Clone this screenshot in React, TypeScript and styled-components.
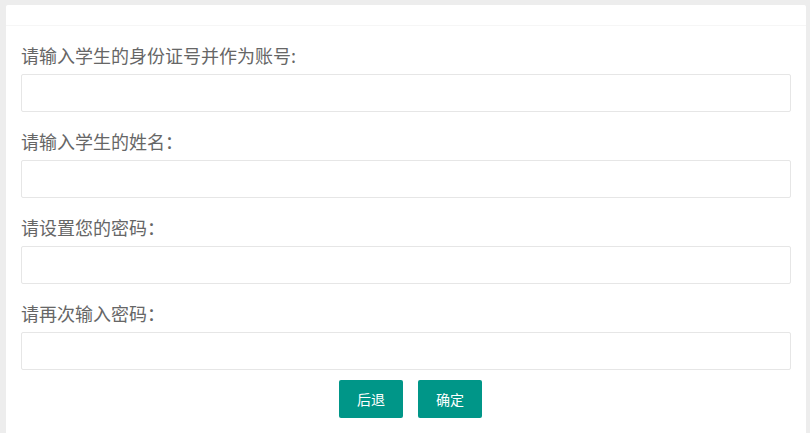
import React from "react";
import styled, { createGlobalStyle } from "styled-components";

const Global = createGlobalStyle`
  html, body { margin: 0; padding: 0; background: #ededed; }
  body { font-family: "Noto Sans CJK SC", "Noto Sans", sans-serif; }
  * { box-sizing: border-box; }
`;

const Page = styled.div`
  padding: 5px 4px 0 6px;
  height: 433px;
  overflow: hidden;
`;

const Card = styled.div`
  background: #fff;
  border-radius: 2px;
  min-height: 440px;
`;

const CardHeader = styled.div`
  height: 21px;
  border-bottom: 1px solid #f6f6f6;
`;

const CardBody = styled.div`
  padding: 17px 15px 0;
`;

const Field = styled.div<{ $first?: boolean }>`
  margin-top: ${(p) => (p.$first ? "0" : "17px")};
`;

const Label = styled.label`
  display: block;
  font-size: 18px;
  line-height: 24px;
  color: #666;
  margin-bottom: 7px;
`;

const Input = styled.input`
  display: block;
  width: 100%;
  height: 38px;
  border: 1px solid #e6e6e6;
  border-radius: 2px;
  background: #fff;
  outline: none;
  padding: 0 10px;
  font-size: 14px;
`;

const Actions = styled.div`
  display: flex;
  justify-content: center;
  gap: 15px;
  margin-top: 10px;
  padding-left: 9px;
`;

const Button = styled.button`
  width: 64px;
  height: 38px;
  border: none;
  border-radius: 2px;
  background: #009688;
  color: #fff;
  font-family: "Noto Sans CJK SC", sans-serif;
  font-size: 14px;
  padding: 0;
  cursor: pointer;
`;

const fields = [
  "请输入学生的身份证号并作为账号:",
  "请输入学生的姓名：",
  "请设置您的密码：",
  "请再次输入密码：",
];

export default function App() {
  return (
    <>
      <Global />
      <Page>
        <Card>
          <CardHeader />
          <CardBody>
            {fields.map((f, i) => (
              <Field key={f} $first={i === 0}>
                <Label>{f}</Label>
                <Input type={i >= 2 ? "password" : "text"} />
              </Field>
            ))}
            <Actions>
              <Button>后退</Button>
              <Button>确定</Button>
            </Actions>
          </CardBody>
        </Card>
      </Page>
    </>
  );
}
